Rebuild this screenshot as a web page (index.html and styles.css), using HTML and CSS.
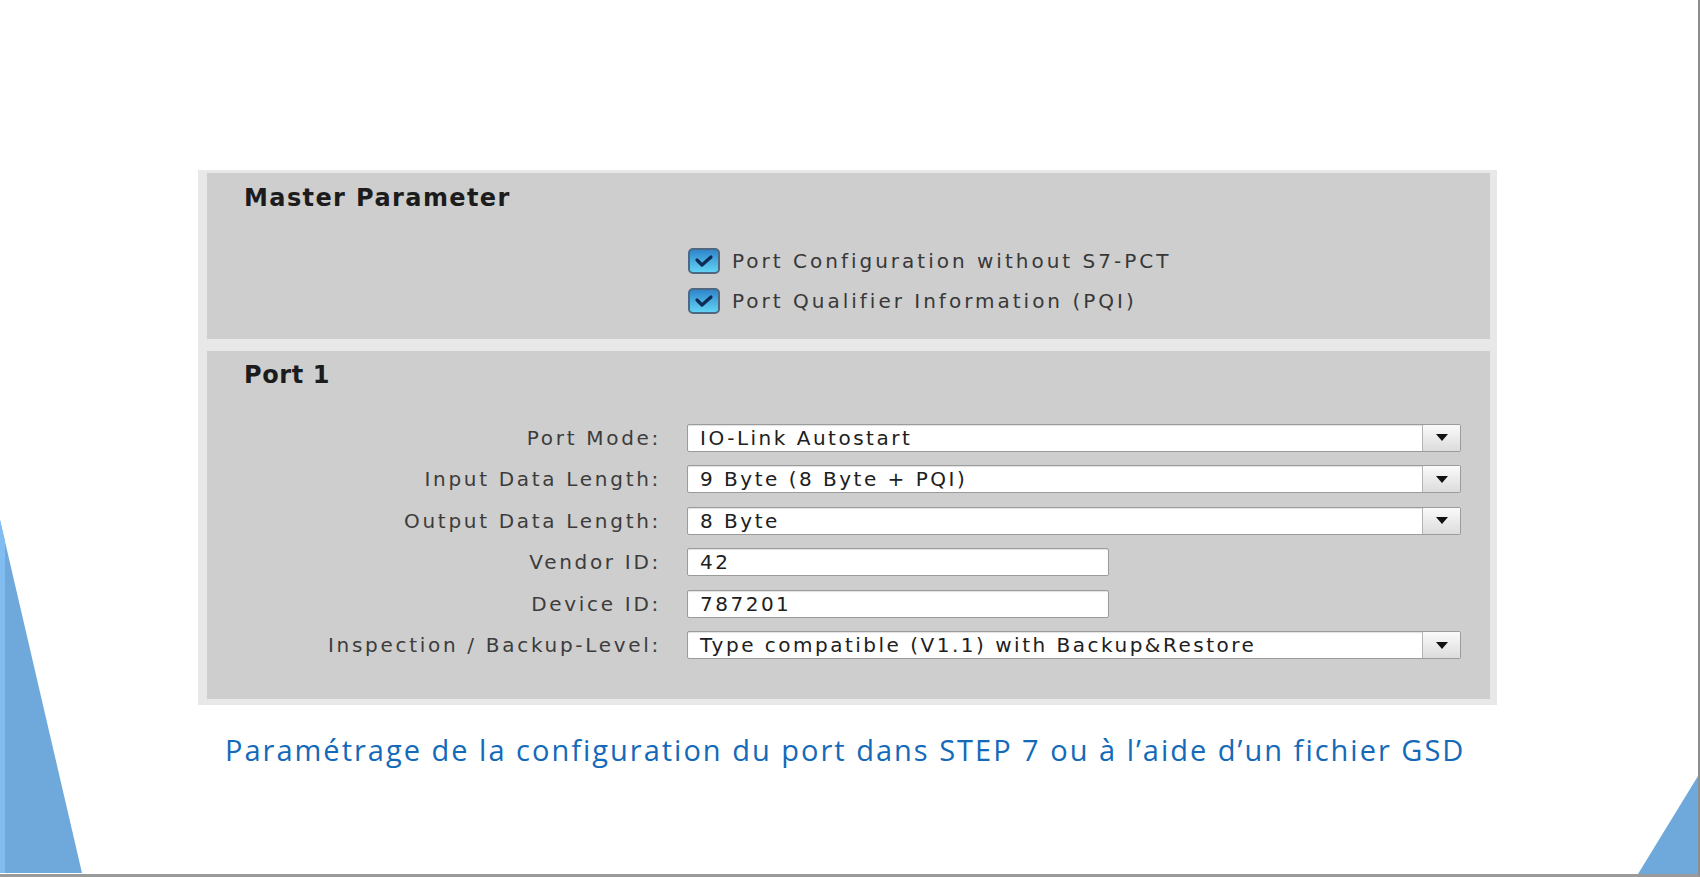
FILE: index.html
```html
<!DOCTYPE HTML><html>
<head>
  <title>Master Parameter - Port 1</title>
  <meta charset="utf-8">
  <meta name="viewport" content="width=device-width, initial-scale=1">
  <link rel="stylesheet" href="styles.css">
</head>

<body>
  <div class="slide">
    <svg class="deco deco-left" width="90" height="353" viewBox="0 0 90 353">
      <polygon points="0,0 82,353 0,353" fill="#6fa8db"/>
      <polygon points="0,0 5,21 5,353 0,353" fill="#82bdf1"/>
    </svg>
    <svg class="deco deco-right" width="60" height="98" viewBox="0 0 60 98">
      <polygon points="60,0 60,98 0,98" fill="#6fa8db"/>
    </svg>

    <div class="panel">
      <div class="section master">
        <h2>Master Parameter</h2>
        <div class="checks">
          <div class="check">
            <span class="box"><svg width="20" height="14" viewBox="0 0 20 14"><path d="M3 6 L8 11 L17 3" fill="none" stroke="#0d2a55" stroke-width="3.2" stroke-linecap="round" stroke-linejoin="round"/></svg></span>
            Port Configuration without S7-PCT
          </div>
          <div class="check">
            <span class="box"><svg width="20" height="14" viewBox="0 0 20 14"><path d="M3 6 L8 11 L17 3" fill="none" stroke="#0d2a55" stroke-width="3.2" stroke-linecap="round" stroke-linejoin="round"/></svg></span>
            Port Qualifier Information (PQI)
          </div>
        </div>
      </div>

      <div class="section port">
        <h2>Port 1</h2>
        <div class="form">
          <span class="lbl">Port Mode:</span>
          <div class="field select"><span class="val">IO-Link Autostart</span><span class="drop"><i class="tri"></i></span></div>

          <span class="lbl">Input Data Length:</span>
          <div class="field select"><span class="val">9 Byte (8 Byte + PQI)</span><span class="drop"><i class="tri"></i></span></div>

          <span class="lbl">Output Data Length:</span>
          <div class="field select"><span class="val">8 Byte</span><span class="drop"><i class="tri"></i></span></div>

          <span class="lbl">Vendor ID:</span>
          <div class="field text"><span class="val">42</span></div>

          <span class="lbl">Device ID:</span>
          <div class="field text"><span class="val">787201</span></div>

          <span class="lbl">Inspection / Backup-Level:</span>
          <div class="field select"><span class="val">Type compatible (V1.1) with Backup&amp;Restore</span><span class="drop"><i class="tri"></i></span></div>
        </div>
      </div>
    </div>

    <p class="caption">Paramétrage de la configuration du port dans STEP 7 ou à l’aide d’un fichier GSD</p>
  </div>
</body>

</html>
```

FILE: styles.css
```css
html {
  font-family: "DejaVu Sans", Verdana, sans-serif;
}
body {
  margin: 0;
  background-color: #fff;
}
.slide {
  position: relative;
  width: 1700px;
  height: 877px;
  box-sizing: border-box;
  border-right: 2px solid #8e8e8e;
  border-bottom: 3px solid #9a9a9a;
  overflow: hidden;
  padding-top: 170px;
}
.deco {
  position: absolute;
  display: block;
}
.deco-left {
  left: 0;
  top: 520px;
}
.deco-right {
  right: 0;
  top: 776px;
}
.panel {
  margin-left: 198px;
  width: 1299px;
  box-sizing: border-box;
  padding: 3px 7px 6px 9px;
  background-color: #e8e8e8;
}
.section {
  background-color: #cecece;
  box-sizing: border-box;
  padding-left: 37px;
}
.master {
  height: 166px;
  padding-top: 11px;
}
.port {
  height: 348px;
  margin-top: 12px;
  padding-top: 10px;
}
h2 {
  margin: 0;
  font-size: 24px;
  line-height: 28px;
  font-weight: bold;
  letter-spacing: 1.4px;
  color: #1c1c1c;
}
.port h2 {
  letter-spacing: 0.6px;
}
.checks {
  margin-top: 29px;
  margin-left: 444px;
}
.check {
  display: flex;
  align-items: center;
  height: 40px;
  font-size: 20px;
  letter-spacing: 3px;
  color: #383838;
}
.box {
  display: flex;
  align-items: center;
  justify-content: center;
  width: 32px;
  height: 26px;
  box-sizing: border-box;
  margin-right: 12px;
  border: 2px solid #4d6880;
  border-radius: 5px;
  background: linear-gradient(#2f86cc, #62d2f4);
}
.form {
  display: grid;
  grid-template-columns: 417px auto;
  column-gap: 26px;
  row-gap: 13.5px;
  margin-top: 34.5px;
  align-items: center;
}
.lbl {
  text-align: right;
  font-size: 20px;
  letter-spacing: 2.7px;
  color: #3c3c3c;
  white-space: nowrap;
}
.field {
  display: flex;
  height: 28px;
  box-sizing: border-box;
  background-color: #fff;
  border: 1px solid #9b9b9b;
  border-radius: 2px;
  box-shadow: inset 0 1px 1px rgba(0,0,0,.12);
}
.select {
  width: 774px;
}
.text {
  width: 422px;
}
.val {
  flex: 1;
  padding-left: 12px;
  font-size: 20px;
  line-height: 26px;
  letter-spacing: 2.5px;
  color: #202020;
  white-space: nowrap;
}
.drop {
  display: flex;
  align-items: center;
  justify-content: center;
  width: 37px;
  border-left: 1px solid #b4b4b4;
  background: linear-gradient(#fafafa, #dcdcdc);
}
.tri {
  width: 0;
  height: 0;
  border-left: 6px solid transparent;
  border-right: 6px solid transparent;
  border-top: 7px solid #111;
}
.caption {
  margin: 28px 0 0 225px;
  font-family: "Open Sans", sans-serif;
  font-size: 29px;
  line-height: 34px;
  letter-spacing: 2px;
  color: #146ab9;
  white-space: nowrap;
}
```
